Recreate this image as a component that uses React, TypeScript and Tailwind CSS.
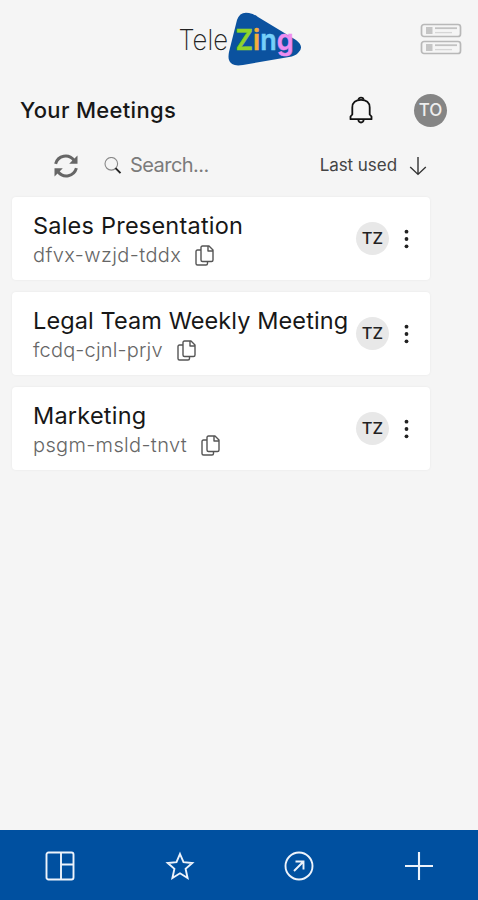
import React from "react";

const meetings = [
  { title: "Sales Presentation", code: "dfvx-wzjd-tddx", codeSpacing: "tracking-[0.4px]", titleSpacing: "tracking-[0.22px]" },
  { title: "Legal Team Weekly Meeting", code: "fcdq-cjnl-prjv", codeSpacing: "tracking-[0.17px]", titleSpacing: "tracking-[0.1px]" },
  { title: "Marketing", code: "psgm-msld-tnvt", codeSpacing: "tracking-[0.34px]", titleSpacing: "tracking-[0.22px]" },
];

function Logo() {
  return (
    <svg width="124" height="56" viewBox="0 0 124 56" role="img" aria-label="TeleZing">
      <path
        d="M59 9Q62 0 71 2Q76 3 80 6L118 29Q127 36 120 42Q117 45 111 46L65 54Q53 56 51 49Q50 46 51 41Z"
        fill="#0b529f"
      />
      <text x="0.5" y="39" fontFamily="Inter, sans-serif" fontSize="28.500" fontWeight="200" fill="#222" textLength="49.500" lengthAdjust="spacingAndGlyphs">Tele</text>
      <text x="57.500" y="39" fontFamily="Inter, sans-serif" fontWeight="600" fontSize="29" strokeWidth=".5" textLength="58" lengthAdjust="spacingAndGlyphs">
        <tspan fill="#8fd329" stroke="#8fd329">Z</tspan><tspan fill="#f4ae3d" stroke="#f4ae3d">i</tspan><tspan fill="#75d0fa" stroke="#75d0fa">n</tspan><tspan fill="#ee8df0" stroke="#ee8df0">g</tspan>
      </text>
    </svg>
  );
}

function ListIcon() {
  return (
    <svg width="42" height="32" viewBox="0 0 42 32" fill="none">
      {[0, 17].map((y) => (
        <g key={y} transform={`translate(0 ${y})`}>
          <rect x="1.5" y="1.5" width="39" height="12" rx="2.500" stroke="#b8b8b8" strokeWidth="1.7" />
          <rect x="6" y="4" width="6.5" height="7" fill="#c5c5c5" />
          <path d="M15 5.2h22" stroke="#c2c2c2" strokeWidth="1.8" />
          <path d="M15 9.6h17" stroke="#d6d6d6" strokeWidth="1.3" />
        </g>
      ))}
    </svg>
  );
}

function BellIcon() {
  return (
    <svg width="24" height="28" viewBox="0 0 24 28" fill="none" stroke="#111" strokeWidth="1.8" strokeLinejoin="round">
      <path d="M1.500 23.2V20.500L3.300 18.500v-7c0-5 3.500-7.700 8.700-7.700s8.700 2.700 8.700 7.700v7l1.800 2v2.700Z" />
      <path d="M9.500 3.800C9.500.8 14.500.8 14.500 3.800M9.300 23.500c.3 4 5.100 4 5.400 0" />
    </svg>
  );
}

function RefreshIcon() {
  return (
    <svg width="24" height="24" viewBox="0 0 24 24" fill="none" stroke="#666" strokeWidth="3">
      <path d="M1.600 9.800C4 1.500 14.500-.7 20 6.300M22.400 14.200C20 22.500 9.500 24.700 4 17.700" />
      <path d="M23.500 1.500v8.300H15.200ZM.5 22.500v-8.300h8.300Z" fill="#666" stroke="none" />
    </svg>
  );
}

function SearchIcon() {
  return (
    <svg width="18" height="18" viewBox="0 0 18 18" fill="none">
      <circle cx="7.300" cy="6.800" r="6.300" stroke="#888" strokeWidth="1.100" />
      <path d="m11.500 11.100 5 5" stroke="#222" strokeWidth="1.900" />
    </svg>
  );
}

function CopyIcon() {
  return (
    <svg width="19" height="21" viewBox="0 0 19 21" fill="none" stroke="#555" strokeWidth="1.400" strokeLinejoin="round">
      <path d="M7.500 1h6.500l4 4v10q0 1.500-1.500 1.500H7.500Q6 16.500 6 15V2.500Q6 1 7.500 1ZM13 1.200V6h4.800" />
      <path d="M6 5H2.500Q1 5 1 6.500v12q0 1.500 1.500 1.500H11q1.500 0 1.500-1.500v-2" />
    </svg>
  );
}

type MeetingCardProps = { title: string; code: string; codeSpacing: string; titleSpacing: string };

function MeetingCard({ title, code, codeSpacing, titleSpacing }: MeetingCardProps) {
  return (
    <article className="flex h-[83px] items-center rounded-[4px] bg-white pl-[21px] pr-[21px] shadow-[0_0_2px_#e5e5e5]">
      <div className="min-w-0 flex-1 pt-[3px]">
        <h2 className={`whitespace-nowrap text-[23.5px] leading-[30px] text-[#171717] ${titleSpacing}`}>{title}</h2>
        <div className="flex h-[28px] items-center gap-[14px]">
          <span className={`text-[20px] font-light leading-[28px] text-[#666] ${codeSpacing}`}>{code}</span>
          <CopyIcon />
        </div>
      </div>
      <div className="flex shrink-0 items-center gap-[15px]">
        <span className="flex size-[33px] items-center justify-center rounded-full bg-[#e8e8e8] text-[16.5px] font-medium text-[#222]">TZ</span>
        <svg width="5" height="20" viewBox="0 0 5 20" fill="#222">
          <circle cx="2.500" cy="2.700" r="1.900" />
          <circle cx="2.500" cy="10" r="1.900" />
          <circle cx="2.500" cy="17.300" r="1.900" />
        </svg>
      </div>
    </article>
  );
}

export default function App() {
  return (
    <div className="flex h-[900px] w-[478px] flex-col overflow-hidden bg-[#f5f5f5] font-['Inter',sans-serif]">
      <header className="flex h-[78px] shrink-0 items-center justify-between pl-[178px] pr-[16px]">
        <Logo />
        <ListIcon />
      </header>
      <div className="flex h-[64px] shrink-0 items-center pl-5 pr-[31px]">
        <h1 className="flex-1 text-[22px] font-medium tracking-[0.32px] text-[#171717]">Your Meetings</h1>
        <BellIcon />
        <span className="ml-[41px] flex size-[33px] items-center justify-center rounded-full bg-[#858585] text-[17px] font-medium text-[#eee]"><span className="pt-px">TO</span></span>
      </div>
      <div className="flex h-[47px] shrink-0 items-center pl-[54px] pr-[51px]">
        <RefreshIcon />
        <div className="ml-[26px] flex flex-1 items-center gap-[8px]">
          <SearchIcon />
          <span className="pb-[2px] text-[20px] tracking-[-0.55px] text-[#7b7b7b]">Search...</span>
        </div>
        <span className="text-[17px] tracking-[-0.05px] text-[#444]">Last used</span>
        <svg className="ml-[12px]" width="18" height="20" viewBox="0 0 18 20" fill="none" stroke="#333" strokeWidth="1.400">
          <path d="M9 1v17M1.200 11 9 18.400 16.800 11" />
        </svg>
      </div>
      <main className="flex w-[442px] flex-1 flex-col gap-[12px] pl-[12px] pr-[12px] pt-[8px]">
        {meetings.map((meeting) => (
          <MeetingCard key={meeting.code} {...meeting} />
        ))}
      </main>
      <nav className="flex h-[70px] shrink-0 items-center justify-between bg-[#0050a0] pl-[45px] pr-[44px] pt-[2px] text-[#edf3fb]">
        <svg width="30" height="30" viewBox="0 0 30 30" fill="none" stroke="currentColor" strokeWidth="1.900">
          <rect x="1.500" y="1.500" width="27" height="27" rx="2" />
          <path d="M16 1.500v27M16 13.500h12.500" />
        </svg>
        <svg width="30" height="30" viewBox="0 0 30 30" fill="none" stroke="currentColor" strokeWidth="1.900" strokeLinejoin="miter">
          <path d="m15 3 3.500 8.200 8.800.8-6.700 5.900 2 9.200-7.600-4.800-7.600 4.800 2-9.200L2.700 12l8.800-.8Z" />
        </svg>
        <svg width="30" height="30" viewBox="0 0 30 30" fill="none" stroke="currentColor" strokeWidth="1.900">
          <circle cx="15" cy="15" r="13.500" />
          <path d="M10 20 19.500 10.500M11.500 10.500h8v8" />
        </svg>
        <svg width="30" height="30" viewBox="0 0 30 30" fill="none" stroke="currentColor" strokeWidth="2.100">
          <path d="M15 1v28M1 15h28" />
        </svg>
      </nav>
    </div>
  );
}
